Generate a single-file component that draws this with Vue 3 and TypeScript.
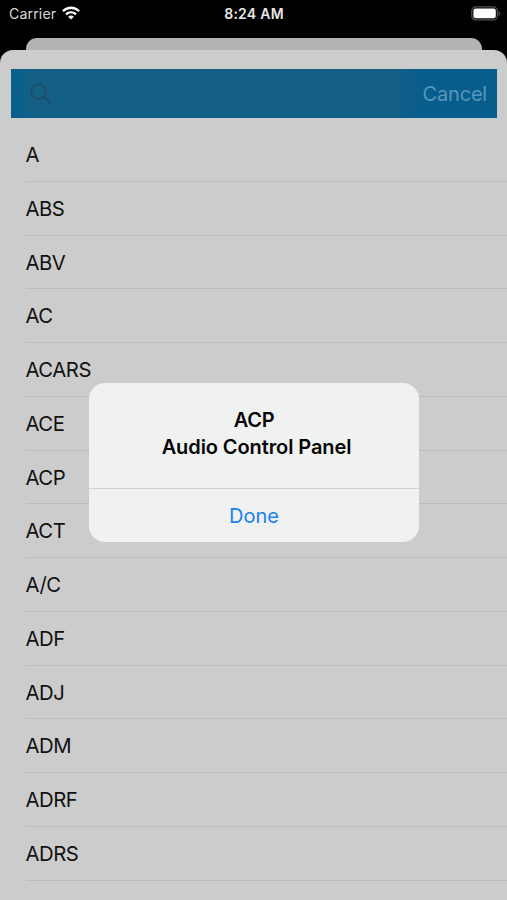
<script setup lang="ts">
import { ref } from 'vue'

const entries: string[] = [
  'A', 'ABS', 'ABV', 'AC', 'ACARS', 'ACE', 'ACP',
  'ACT', 'A/C', 'ADF', 'ADJ', 'ADM', 'ADRF', 'ADRS',
]
const selected = ref<{ code: string; meaning: string } | null>({
  code: 'ACP',
  meaning: 'Audio Control Panel',
})
</script>

<template>
  <div class="phone">
    <header class="status">
      <div class="carrier">
        <span class="carrier-name">Carrier</span>
        <svg class="wifi" viewBox="0 0 18 14" width="18" height="14" fill="none" stroke="#fff" stroke-width="2.3">
          <path d="M0.9 5.2C5.5 0.6 12.5 0.6 17.1 5.2" />
          <path d="M4 8.4C6.9 5.7 11.1 5.7 14 8.4" />
          <path d="M9 13.6L6.1 10.7C7.8 9.2 10.2 9.2 11.9 10.7Z" fill="#fff" stroke="none" />
        </svg>
      </div>
      <span class="time">8:24 AM</span>
      <svg class="battery" viewBox="0 0 30 15" width="30" height="15">
        <rect x="0.8" y="0.9" width="25.6" height="13" rx="4" fill="#000" stroke="#555" stroke-width="1.2" />
        <rect x="2.4" y="2.5" width="22.4" height="9.8" rx="2.2" fill="#fff" />
        <path d="M27.7 5.2C29.7 6 29.7 8.9 27.7 9.7Z" fill="#555" />
      </svg>
    </header>
    <div class="back-sheet"></div>
    <main class="sheet">
      <div class="search">
        <svg class="glass" viewBox="0 0 22 22" width="22" height="22" fill="none" stroke="#204c66">
          <circle cx="8.4" cy="8.5" r="7.3" stroke-width="1.7" />
          <path d="M13.7 13.8L20.7 20.3" stroke-width="2.1" />
        </svg>
        <span class="cancel">Cancel</span>
      </div>
      <ul class="list">
        <li v-for="entry in entries" :key="entry" class="row">{{ entry }}</li>
      </ul>
    </main>
    <div v-if="selected" class="alert">
      <div class="message">
        <div>{{ selected.code }}</div>
        <div class="meaning">{{ selected.meaning }}</div>
      </div>
      <div class="done" @click="selected = null">Done</div>
    </div>
  </div>
</template>

<style>
body {
  background: #000;
}
</style>

<style scoped>
.phone {
  position: relative;
  display: flex;
  flex-direction: column;
  width: 507px;
  height: 900px;
  overflow: hidden;
  background: #000;
  font-family: Inter, "Liberation Sans", sans-serif;
}
.status {
  display: grid;
  grid-template-columns: 1fr auto 1fr;
  align-items: center;
  height: 28px;
  padding: 0 6px 0 9px;
  margin-bottom: 10px;
  box-sizing: border-box;
}
.carrier {
  display: flex;
  align-items: center;
  gap: 6px;
}
.carrier-name {
  margin-top: -2px;
  font-size: 14.2px;
  letter-spacing: 0.1px;
  color: #d8d8d8;
}
.wifi {
  margin-top: -2px;
}
.time {
  margin: -2px 2px 0 0;
  font-size: 14px;
  font-weight: 600;
  letter-spacing: 0.25px;
  color: #e8e8e8;
}
.battery {
  justify-self: end;
  margin-top: -1px;
}
.back-sheet {
  flex: none;
  height: 12px;
  margin: 0 25px 0 26px;
  border-radius: 11px 11px 0 0;
  background: #b3b3b3;
}
.sheet {
  flex: 1;
  min-height: 0;
  padding-top: 19px;
  border-radius: 13px 13px 0 0;
  background: #ccc;
}
.search {
  display: flex;
  align-items: center;
  justify-content: space-between;
  height: 49px;
  margin: 0 10px 10px 11px;
  padding: 0 10px 0 19px;
  box-sizing: border-box;
  background: linear-gradient(90deg, #075f8e 0, #135f86 22px, #135f86 385px, #075d8b 410px);
}
.glass {
  margin-top: 1px;
}
.cancel {
  font-size: 20px;
  letter-spacing: -0.2px;
  color: #5796ba;
}
.list {
  margin: 0;
  padding: 0;
  list-style: none;
}
.row {
  height: 53.77px;
  margin-left: 25.5px;
  box-sizing: border-box;
  border-bottom: 1px solid #bcbcbd;
  font-size: 20.3px;
  line-height: 54.4px;
  letter-spacing: -0.45px;
  color: #111;
}
.alert {
  position: absolute;
  top: 383px;
  left: 89px;
  width: 330px;
  height: 159px;
  border-radius: 16px;
  background: #f0f1f1;
  text-align: center;
}
.message {
  height: 106px;
  padding-top: 24px;
  box-sizing: border-box;
  border-bottom: 1px solid #d0d1d2;
  font-size: 20px;
  font-weight: 600;
  line-height: 27px;
  letter-spacing: -0.3px;
  color: #060606;
}
.meaning {
  padding-left: 5px;
  letter-spacing: -0.09px;
}
.done {
  font-size: 20px;
  line-height: 55px;
  color: #1a80f4;
}
</style>
